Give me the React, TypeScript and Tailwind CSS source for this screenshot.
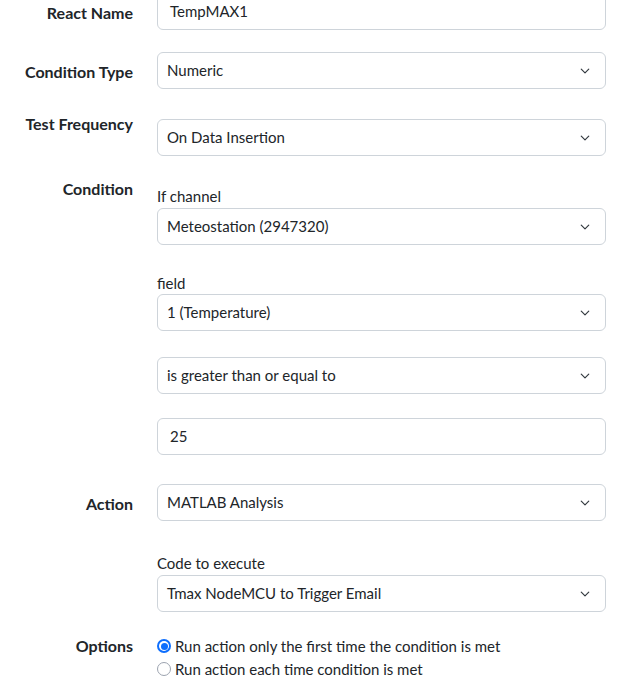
import React from "react"

function Chevron() {
  return (
    <svg width="12" height="12" viewBox="0 0 16 16" className="shrink-0">
      <path d="M3 5.5l5 5 5-5" fill="none" stroke="#343a40" strokeWidth="1.6" strokeLinecap="round" strokeLinejoin="round" />
    </svg>
  )
}

function Select({ value, className = "" }: { value: string; className?: string }) {
  return (
    <div className={`h-[37px] rounded-[6px] border border-[#ced4da] bg-white flex items-center justify-between pl-[9px] pr-[14px] ${className}`}>
      <span>{value}</span>
      <Chevron />
    </div>
  )
}

function Input({ value, className = "" }: { value: string; className?: string }) {
  return (
    <div className={`h-[37px] rounded-[6px] border border-[#ced4da] bg-white flex items-center pl-[12px] ${className}`}>
      <span>{value}</span>
    </div>
  )
}

function Label({ text, className = "" }: { text: string; className?: string }) {
  return <div className={`w-[133px] shrink-0 text-right font-bold text-[16px] text-[#212529] leading-[20px] ${className}`}>{text}</div>
}

function Radio({ checked, text, className = "" }: { checked?: boolean; text: string; className?: string }) {
  return (
    <div className={`flex items-center leading-[20px] ${className}`}>
      {checked ? (
        <span className="w-[14px] h-[14px] rounded-full bg-[#0d6efd] flex items-center justify-center shrink-0">
          <span className="w-[10px] h-[10px] rounded-full bg-white flex items-center justify-center">
            <span className="w-[7px] h-[7px] rounded-full bg-[#0d6efd]" />
          </span>
        </span>
      ) : (
        <span className="w-[14px] h-[14px] rounded-full border border-[#9ca3af] bg-white shrink-0" />
      )}
      <span className="ml-[4px]">{text}</span>
    </div>
  )
}

export default function App() {
  return (
    <main
      className="bg-white text-[#212529] text-[15px] pr-[12px] -mt-[7px] h-[705px] overflow-hidden"
      style={{ fontFamily: "Lato, 'Open Sans', sans-serif" }}
    >
      <div className="flex">
        <Label text="React Name" className="pt-[10px]" />
        <div className="ml-6 flex-1">
          <Input value="TempMAX1" />
        </div>
      </div>

      <div className="flex mt-[22px]">
        <Label text="Condition Type" className="pt-[10px]" />
        <div className="ml-6 flex-1">
          <Select value="Numeric" />
        </div>
      </div>

      <div className="flex mt-[25px]">
        <Label text="Test Frequency" />
        <div className="ml-6 flex-1">
          <Select value="On Data Insertion" className="mt-[5px]" />
        </div>
      </div>

      <div className="flex mt-[23px]">
        <Label text="Condition" />
        <div className="ml-6 flex-1">
          <div className="mt-[7px] leading-[20px]">If channel</div>
          <Select value="Meteostation (2947320)" className="mt-[2px]" />
          <div className="mt-[28px] leading-[20px]">field</div>
          <Select value="1 (Temperature)" className="mt-[1px]" />
          <Select value="is greater than or equal to" className="mt-[26px]" />
          <Input value="25" className="mt-[24px]" />
        </div>
      </div>

      <div className="flex mt-[29px]">
        <Label text="Action" className="pt-[10px]" />
        <div className="ml-6 flex-1">
          <Select value="MATLAB Analysis" />
        </div>
      </div>

      <div className="flex mt-[32px]">
        <div className="w-[133px] shrink-0" />
        <div className="ml-6 flex-1">
          <div className="leading-[20px]">Code to execute</div>
          <Select value="Tmax NodeMCU to Trigger Email" className="mt-[2px]" />
        </div>
      </div>

      <div className="flex mt-[24px]">
        <Label text="Options" />
        <div className="ml-6 flex-1">
          <Radio checked text="Run action only the first time the condition is met" />
          <Radio text="Run action each time condition is met" className="mt-[3px]" />
        </div>
      </div>
    </main>
  )
}
